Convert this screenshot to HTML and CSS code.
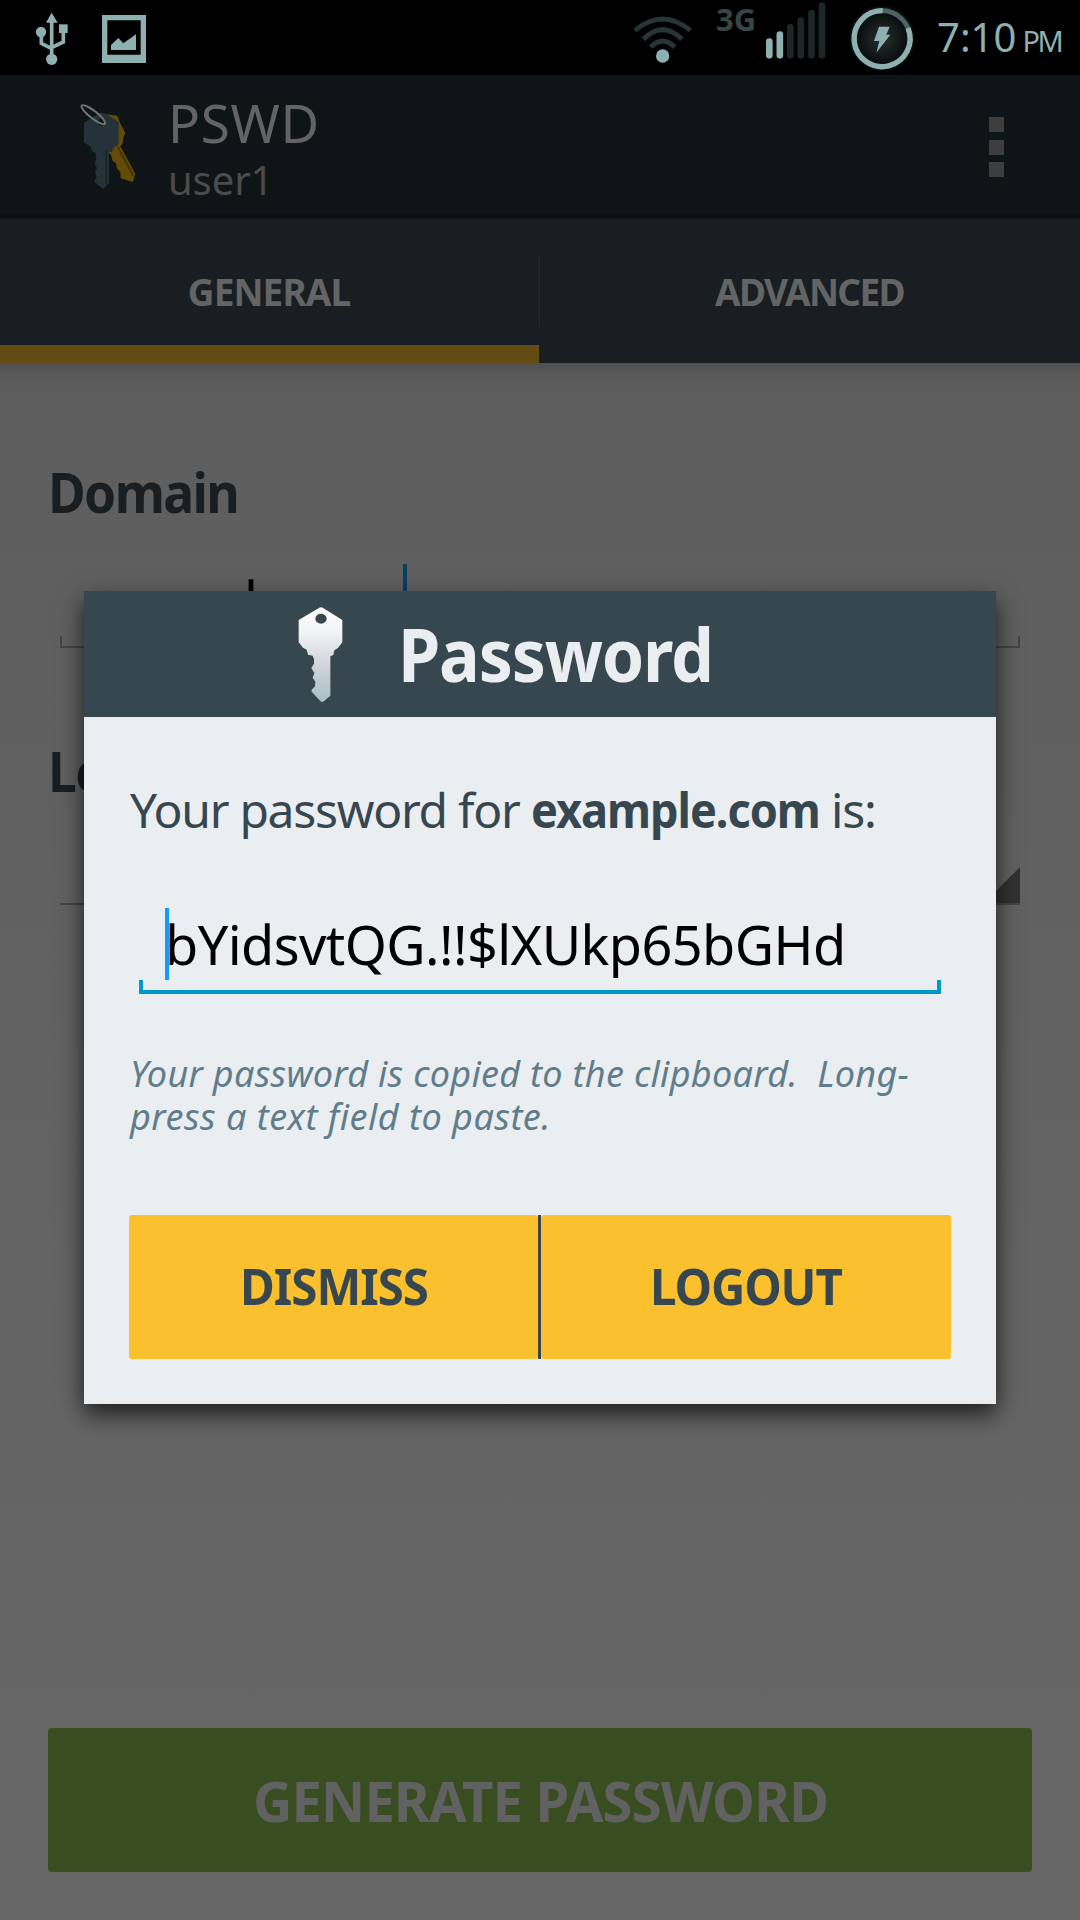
FILE: index.html
```html
<!DOCTYPE html>
<html lang="en">
<head>
<meta charset="utf-8">
<title>PSWD</title>
<link rel="stylesheet" href="styles.css">
</head>
<body>
<div class="screen">
  <header class="status">
    <svg class="usb" viewBox="105 36 102 162"><g fill="none" stroke="#8eb0b0" stroke-width="11"><path d="M155 60V165M124 100V130L155 146M190 95V126L155 143"/></g><g fill="#8eb0b0"><path d="M155 38L173 68H138Z"/><circle cx="123" cy="96" r="15.500"/><rect x="177" y="73" width="26" height="26"/><circle cx="155" cy="178" r="17"/></g></svg>
    <svg class="photo" viewBox="306 45 132 144"><path fill="#8eb0b0" fill-rule="evenodd" d="M306 45H438V189H306ZM322 61V164H422V61Z"/><path fill="#8eb0b0" d="M333 150V135L355 114L370 130L408 103V150Z"/></svg>
    <svg class="wifi" viewBox="96 45 183 144"><g fill="none" stroke="#293435" stroke-width="15"><path d="M105 91Q188 23 271 91M130 118Q188 60 246 118M152 141Q188 106 224 141"/></g><circle cx="188" cy="168" r="20" fill="#8eb0b0"/></svg>
    <span class="net">3G</span>
    <svg class="signal" viewBox="495 6 183 171"><g stroke-width="20" stroke-linecap="round"><path stroke="#8eb0b0" d="M508 125V166M539.500 104V166"/><path stroke="#1e2727" d="M571 81V166M602.500 62V166M634.500 39V166M666 17V166"/></g></svg>
    <svg class="battery" viewBox="744 12 204 204"><defs><radialGradient id="glow"><stop offset="0" stop-color="#263030"/><stop offset=".72" stop-color="#0b0f0f"/><stop offset=".84" stop-color="#1c2929"/><stop offset="1" stop-color="#000"/></radialGradient></defs><circle cx="846" cy="115" r="100" fill="url(#glow)"/><circle cx="846" cy="116" r="84" fill="none" stroke="#4d6363" stroke-width="14"/><path d="M848 32A84 84 0 1 0 924 84" fill="none" stroke="#8eb0b0" stroke-width="16"/><path fill="#8eb0b0" d="M837 80H869L859 104H871L829 158L838 123H822Z"/></svg>
    <span class="time">7:10</span><span class="ampm">PM</span>
  </header>

  <div class="appbar">
    <svg class="logo" viewBox="240 309 171 261">
      <path fill="#644b06" d="M316 342L352 347L360 369L376 399L370 412L368 430L361 438L406 522L398 546L362 535L361 516L350 504L349 491L338 483L333 466L320 450Z"/>
      <path stroke="#3e3008" stroke-width="5" d="M353 440L400 528"/>
      <path fill="#263239" d="M252 368L300 338L318 341L356 366V432L341 444L336 455L327 457V550L309 567L283 545L290 530L285 516L291 505L284 491L289 478L287 459L275 453L272 441L252 427Z"/>
      <path stroke="#192226" stroke-width="5" d="M319 450V556"/>
      <circle cx="304" cy="366" r="11" fill="#10171a"/>
      <ellipse cx="280" cy="344" rx="44" ry="11" transform="rotate(38 280 344)" fill="none" stroke="#707475" stroke-width="6"/>
    </svg>
    <div class="titles"><div class="title">PSWD</div><div class="user">user1</div></div>
    <div class="more"><i></i><i></i><i></i></div>
  </div>

  <nav class="tabs">
    <div class="tab active">GENERAL</div>
    <div class="tab">ADVANCED</div>
  </nav>

  <main class="content">
    <div class="label">Domain</div>
    <div class="field"><span class="field-text">example.com</span><i class="caret"></i></div>
    <div class="label second">Length</div>
    <div class="spinner"><i class="corner"></i></div>
    <div class="generate"><span>GENERATE PASSWORD</span></div>
  </main>

  <section class="dialog">
    <div class="dialog-head">
      <svg class="key" viewBox="80 49 141 291"><defs><linearGradient id="silver" x1="0" y1="0" x2="0" y2="1"><stop offset="0" stop-color="#fff"/><stop offset=".25" stop-color="#f3f4f5"/><stop offset=".65" stop-color="#cbd3d8"/><stop offset="1" stop-color="#adbcc4"/></linearGradient></defs><path fill="url(#silver)" fill-rule="evenodd" d="M147 54Q152 51 157 54L216 91V158L203 175L192 182L189 196L180 200V318L159 336H152L124 306V300L134 290L135 276L127 264L132 250L123 235L131 222V208L127 198L113 195L109 180L98 174L85 158V91ZM135 87A17 15 0 1 0 169 87A17 15 0 1 0 135 87Z"/></svg>
      <span class="dialog-title">Password</span>
    </div>
    <div class="dialog-body">
      <div class="message">Your password for <b>example.com</b> is:</div>
      <div class="secret"><i class="caret"></i><span class="secret-text">bYidsvtQG.!!$lXUkp65bGHd</span></div>
      <div class="hint"><div>Your password is copied to the clipboard.&nbsp; Long-</div><div class="hint-last">press a text field to paste.</div></div>
      <div class="actions"><div class="action dismiss"><span>DISMISS</span></div><div class="action logout"><span>LOGOUT</span></div></div>
    </div>
  </section>
</div>
</body>
</html>
```
FILE: styles.css
```css
* { box-sizing: border-box; }
body { margin: 0; background: #000; font-family: "Noto Sans", sans-serif; }
svg { display: block; flex: none; }
.screen { position: relative; width: 1080px; height: 1920px; overflow: hidden; display: flex; flex-direction: column; }

.status { height: 75px; background: #000; color: #8eb0b0; display: flex; align-items: flex-start; padding-left: 35px; }
.usb { width: 34px; height: 54px; margin-top: 12px; }
.photo { width: 44px; height: 48px; margin: 15px 0 0 33px; }
.wifi { width: 61px; height: 48px; margin: 15px 0 0 486px; }
.net { width: 48px; margin-left: 23px; font-size: 31px; line-height: 38px; font-weight: 700; color: #364545; }
.signal { width: 61px; height: 57px; margin: 2px 0 0 1px; }
.battery { width: 68px; height: 68px; margin: 4px 0 0 22px; }
.time { margin-left: 21px; font-size: 40px; line-height: 74px; }
.ampm { margin-left: 6px; font-size: 29px; line-height: 82px; letter-spacing: -2.500px; }

.appbar { height: 144px; padding: 18px 76px 0 80px; background: #0f1416; display: flex; border-bottom: 5px solid #0d1113; }
.logo { width: 57px; height: 87px; margin-top: 10px; }
.titles { margin-left: 31px; flex: 1; }
.title { font-size: 53px; line-height: 60px; letter-spacing: .7px; color: #636363; }
.user { font-size: 40px; line-height: 53px; letter-spacing: -.1px; color: #4b4b4b; }
.more { display: flex; flex-direction: column; gap: 7.500px; margin-top: 24px; }
.more i { width: 15px; height: 15px; background: #3e3e3f; }

.tabs { height: 144px; flex: none; display: flex; background: #181e21; }
.tab { width: 540px; display: flex; align-items: center; justify-content: center; font-size: 37px; font-weight: 700; letter-spacing: -1.660px; color: #646464; border-bottom: 18px solid transparent; padding-top: 18px; }
.tab.active { width: 539px; letter-spacing: -.930px; border-color: #644b14; padding-right: 1px; }
.tab + .tab { width: 541px; background: linear-gradient(#24292c, #24292c) 0 36px / 1px 72px no-repeat; }

.content { flex: 1; padding: 98px 48px 48px; display: flex; flex-direction: column; background: linear-gradient(#4f4f4f 0, #575757 8px, #5c5c5c 22px, #5e5e5e 50px, #666 1400px); }
.label { height: 60px; line-height: 61px; font-size: 56px; font-weight: 700; letter-spacing: -1.750px; color: #181e22; transform: scaleX(.92); transform-origin: 0 50%; }
.field { margin: 43px 12px 0; height: 84px; padding-left: 25px; display: flex; border-bottom: 2px solid #444; color: #000; font-size: 54px; line-height: 73px; letter-spacing: -2.600px;
  background: linear-gradient(#444, #444) 0 100% / 2px 10px no-repeat, linear-gradient(#444, #444) 100% 100% / 2px 10px no-repeat; }
.field .caret { width: 4px; height: 72px; background: #063f66; }
.field-text { width: 318px; }
.second { margin-top: 92px; }
.spinner { height: 105px; margin: 0 12px; border-bottom: 2px solid #444; display: flex; justify-content: flex-end; align-items: flex-end; }
.corner { width: 36px; height: 36px; background: #323232; clip-path: polygon(100% 0, 100% 100%, 0 100%); }
.generate { margin-top: auto; height: 144px; border-radius: 4px; background: #384e20; color: #616161; display: flex; align-items: center; justify-content: center; font-size: 56px; font-weight: 700; letter-spacing: -.8px; }
.generate span { transform: scaleX(.97); padding-left: 1px; }

/* modal above the dimmed page */
.dialog { position: absolute; left: 84px; top: 591px; width: 912px; height: 813px; background: #ebeef1; box-shadow: 0 10px 22px 0 rgba(0,0,0,.7); }
.dialog-head { height: 126px; background: #37474f; display: flex; align-items: center; padding-left: 213px; }
.key { width: 47px; height: 97px; }
.dialog-title { margin-left: 54px; font-size: 74px; line-height: 126px; font-weight: 700; letter-spacing: -1.3px; color: #ebeef1; transform: scaleX(.92); transform-origin: 0 50%; }
.dialog-body { padding: 60px 45px 45px; }
.message { height: 66px; line-height: 66px; padding-left: 1px; font-size: 48px; letter-spacing: -1.280px; color: #37474f; white-space: nowrap; }
.message b { display: inline-block; font-weight: 700; letter-spacing: -1.1px; transform: scaleX(.94); transform-origin: 0 50%; margin-right: -18px; }
.secret { margin: 65px 10px 0; height: 86px; display: flex; padding-left: 26px; border-bottom: 4px solid #0099cc; color: #000; font-size: 54px; line-height: 73px; letter-spacing: -.570px;
  background: linear-gradient(#0099cc, #0099cc) 0 100% / 4px 10px no-repeat, linear-gradient(#0099cc, #0099cc) 100% 100% / 4px 10px no-repeat; }
.secret .caret { width: 4px; height: 72px; margin-right: -4px; background: #109bff; }
.hint { margin-top: 58px; padding-left: 1px; font-size: 36px; line-height: 43px; font-style: italic; letter-spacing: .3px; color: #607d8b; white-space: nowrap; }
.hint-last { letter-spacing: .5px; }
.actions { display: flex; justify-content: space-between; width: 822px; height: 144px; margin-top: 77px; background: linear-gradient(#37474f, #37474f) 409px 0 / 3px 100% no-repeat; }
.action { border-radius: 3px; background: #fbc02d; padding-bottom: 2px; display: flex; align-items: center; justify-content: center; font-size: 50px; font-weight: 700; color: #37474f; }
.action span { transform: scaleX(.95); }
.dismiss { width: 409px; letter-spacing: -1.050px; }
.logout { width: 410px; letter-spacing: -1.2px; }
```
